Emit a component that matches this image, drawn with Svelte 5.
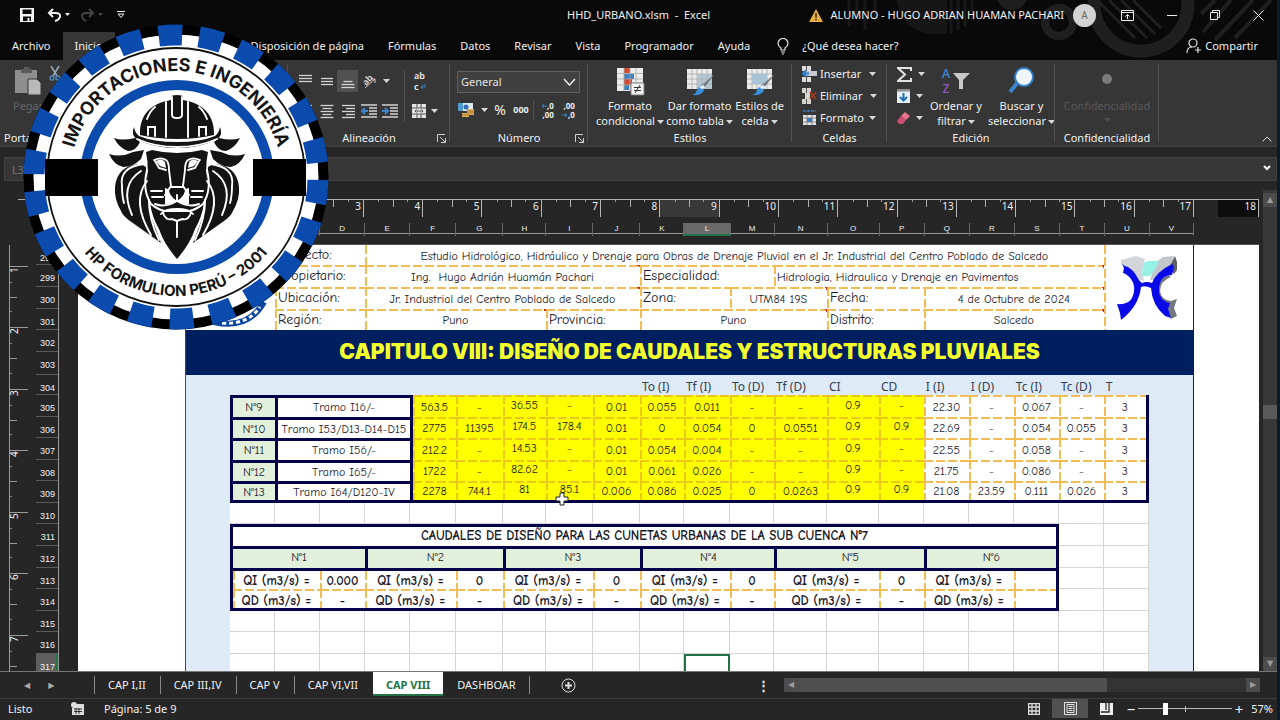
<script>
  const widths = [44, 45, 45, 45, 45, 46, 47, 43, 47, 47, 44, 46, 44, 53, 52, 45, 45, 45, 45, 45, 45, 44];
  const letters = 'ABCDEFGHIJKLMNOPQRSTUV'.split('');
  const gridCols = widths.map((w) => w + 'fr').join(' ');
  const rowHeads = [
    [298, 20], [299, 22], [300, 22], [301, 21], [302, 22], [303, 23], [304, 20], [305, 22],
    [306, 21], [307, 22], [308, 21], [309, 22], [310, 21], [311, 22], [312, 22], [313, 21],
    [314, 22], [315, 21], [316, 22], [317, 22]
  ];
  const ticks = Array.from({ length: 17 }, (_, i) => i + 1);
  const vticks = [1, 2, 3, 4, 5, 6, 7];
  const info = [
    { h: 20, cells: [['Proyecto:', 2, 1], ['Estudio Hidrológico, Hidráulico y Drenaje para Obras de Drenaje Pluvial en el Jr. Industrial del Centro Poblado de Salcedo', 16, 0]] },
    { h: 22, cells: [['Propietario:', 2, 1], ['Ing.  Hugo Adrián Huamán Pachari', 6, 0, 1], ['Especialidad:', 3, 1], ['Hidrologia, Hidraulica y Drenaje en Pavimentos', 7, 2, 1]] },
    { h: 22, cells: [['Ubicación:', 2, 1], ['Jr. Industrial del Centro Poblado de Salcedo', 6, 0, 1], ['Zona:', 2, 1], ['UTM84 19S', 2, 0, 1], ['Fecha:', 2, 1], ['4 de Octubre de 2024', 4, 0, 1]] },
    { h: 21, cells: [['Región:', 2, 1], ['Puno', 4, 0, 1], ['Provincia:', 2, 1], ['Puno', 4, 0, 1], ['Distrito:', 2, 1], ['Salcedo', 4, 0, 1]] }
  ];
  const heads = ['', '', '', '', '', '', '', '', '', 'To (I)', 'Tf (I)', 'To (D)', 'Tf (D)', 'CI', 'CD', 'I (I)', 'I (D)', 'Tc (I)', 'Tc (D)', 'T'];
  const data = [
    { h: 22, n: 'N°9', t: 'Tramo I16/-', v: ['563.5', '-', '36.55', '-', '0.01', '0.055', '0.011', '-', '-', '0.9', '-', '22.30', '-', '0.067', '-', '3'] },
    { h: 21, n: 'N°10', t: 'Tramo I53/D13-D14-D15', v: ['2775', '11395', '174.5', '178.4', '0.01', '0', '0.054', '0', '0.0551', '0.9', '0.9', '22.69', '-', '0.054', '0.055', '3'] },
    { h: 22, n: 'N°11', t: 'Tramo I56/-', v: ['212.2', '-', '14.53', '-', '0.01', '0.054', '0.004', '-', '-', '0.9', '-', '22.55', '-', '0.058', '-', '3'] },
    { h: 21, n: 'N°12', t: 'Tramo I65/-', v: ['1722', '-', '82.62', '-', '0.01', '0.061', '0.026', '-', '-', '0.9', '-', '21.75', '-', '0.086', '-', '3'] },
    { h: 22, n: 'N°13', t: 'Tramo I64/D120-IV', v: ['2278', '744.1', '81', '85.1', '0.006', '0.086', '0.025', '0', '0.0263', '0.9', '0.9', '21.08', '23.59', '0.111', '0.026', '3'] }
  ];
  const raised = [2, 3, 9, 10];
  const flows = [
    { h: 21, label: 'QI (m3/s) =', v: ['0.000', '0', '0', '0', '0', ''] },
    { h: 22, label: 'QD (m3/s) =', v: ['-', '-', '-', '-', '-', ''] }
  ];
  const menu = ['Disposición de página', 'Fórmulas', 'Datos', 'Revisar', 'Vista', 'Programador', 'Ayuda'];
  const sheets = ['CAP I,II', 'CAP III,IV', 'CAP V', 'CAP VI,VII', 'CAP VIII', 'DASHBOAR'];
  let zoom = $state(57);
</script>

{#snippet caret()}<svg class="caret" width="7" height="4" viewBox="0 0 7 4"><path d="M0 0h7L3.500 4z" fill="#d8d8d8" /></svg>{/snippet}
{#snippet lines(ws, align)}
  <svg width="16" height="16" viewBox="0 0 16 16" stroke="#d4d4d4" stroke-width="1.300">
    {#each ws as w, i}
      <path d={align === 'r' ? `M15 ${2.5 + i * 3}H${15 - w}` : align === 'c' ? `M${8 - w / 2} ${2.5 + i * 3}h${w}` : `M1 ${2.5 + i * 3}h${w}`} />
    {/each}
  </svg>
{/snippet}
{#snippet launcher()}<button class="launch" aria-label="Opciones del grupo"><svg width="9" height="9" viewBox="0 0 9 9" fill="none" stroke="#d0d0d0"><path d="M.5 8V.5H8M3 3l5 5M8.500 4v4.500H4" /></svg></button>{/snippet}
{#snippet tableIcon()}
  <path d="M2 3h25v20H2z" fill="#ececec" />
  <path d="M2 8h25M2 13h25M2 18h25M7 3v20M12 3v20M17 3v20M22 3v20" stroke="#a9a9a9" stroke-width=".8" />
{/snippet}
{#snippet brush()}
  <path d="M30 8L19 21l-3-2z" fill="#8e9498" /><path d="M30 8L19 21l-1-1z" fill="#5c6266" />
  <path d="M19 21c1 5-3 9-12 8 4-1 4-3 5-5 1-3 4-5 7-3z" fill="#3a8edb" /><path d="M14 22l4-3 2 2-2 2z" fill="#e8f2fb" />
{/snippet}

<div class="window">
  <header class="top">
    <svg class="art" width="480" height="60" viewBox="0 0 480 60" aria-hidden="true" fill="none" stroke="#1f1f1f">
      <path d="M52 0v26M60 0v18M68 0v30M78 0v22M154 0v34M161 0v30M168 0v26M175 0v20" stroke-width="3" stroke="#181818" />
      <path d="M100 0q4 30 34 34h16V0z" fill="#161616" stroke="none" />
      <circle cx="262" cy="22" r="14" stroke-width="8" /><circle cx="215" cy="-6" r="16" fill="#1f1f1f" stroke="none" />
      <circle cx="344" cy="4" r="47" stroke-width="13" /><path d="M300 0l38 38M312 0l38 38M324 0l34 34M336 0l28 28" stroke-width="3" />
      <path d="M418 0l-14 14M434 0l-28 32M456 0l-38 40M474 0l-36 38" stroke-width="4" />
    </svg>
    <div class="titlebar">
      <div class="quick">
        <button aria-label="Guardar"><svg width="14" height="14" viewBox="0 0 14 14"><path d="M0 0h14v14H0z" fill="#f2f2f2" /><path d="M2.500 1.500h9v4.500h-9zM3 8.500h8V13H9.500v-3h-2v3H3z" fill="#0a0a0a" /></svg></button>
        <button aria-label="Deshacer"><svg width="24" height="14" viewBox="0 0 24 14" fill="none" stroke="#f2f2f2" stroke-width="2"><path d="M6 1L2 5l4 4M2 5h6q6 0 5 4-1 3-5 4" /><path d="M18 5h5l-2.500 3z" fill="#f2f2f2" stroke="none" /></svg></button>
        <button aria-label="Rehacer"><svg width="24" height="14" viewBox="0 0 24 14" fill="none" stroke="#444" stroke-width="2"><path d="M9 1l4 4-4 4M13 5H7Q1 5 2 9q1 3 4 4" /><path d="M18 5h5l-2.500 3z" fill="#444" stroke="none" /></svg></button>
        <button aria-label="Personalizar"><svg width="8" height="8" viewBox="0 0 8 8"><path d="M0 .5h8" stroke="#eee" /><path d="M1 3h6L4 6.500z" fill="none" stroke="#eee" /></svg></button>
      </div>
      <div class="doc">HHD_URBANO.xlsm&nbsp; -&nbsp; Excel</div>
      <div class="account">
        <svg width="14" height="13" viewBox="0 0 14 13"><path d="M7 0l7 13H0z" fill="#e9b04a" /><path d="M7 4v5M7 10v1.500" stroke="#3a2a08" stroke-width="1.500" /></svg>
        <span class="user">ALUMNO - HUGO ADRIAN HUAMAN PACHARI</span>
        <span class="avatar">A</span>
        <button aria-label="Opciones de cinta"><svg width="13" height="11" viewBox="0 0 13 11" fill="none" stroke="#eee"><path d="M.5.5h12v10H.5zM.5 2.500h12M6.500 9V4.500M4.500 6.500l2-2 2 2" /></svg></button>
        <button aria-label="Minimizar"><svg width="10" height="10" viewBox="0 0 10 10"><path d="M0 5.500h10" stroke="#eee" /></svg></button>
        <button aria-label="Restaurar"><svg width="10" height="10" viewBox="0 0 10 10" fill="none" stroke="#eee"><path d="M.5 2.500h7v7h-7zM2.500 2V.5h7v7H8" /></svg></button>
        <button aria-label="Cerrar"><svg width="11" height="11" viewBox="0 0 11 11"><path d="M.5.5l10 10M10.500.5l-10 10" stroke="#eee" /></svg></button>
      </div>
    </div>
    <nav class="menu">
      <button class="file">Archivo</button>
      <button class="home">Inicio</button>
      {#each menu as m}<button>{m}</button>{/each}
      <svg width="12" height="17" viewBox="0 0 12 17" fill="none" stroke="#e6e6e6" stroke-width="1.200"><path d="M4 12V10Q1 8 1 5.500a5 5 0 0110 0Q11 8 8 10v2zM4 14h4M5 16h2" /></svg>
      <button>¿Qué desea hacer?</button>
      <button class="share"><svg width="15" height="16" viewBox="0 0 15 16" fill="none" stroke="#e6e6e6" stroke-width="1.200"><circle cx="7" cy="5" r="4" /><path d="M1 15q0-6 5-6M9 12h6M12 9v6" /></svg>Compartir</button>
    </nav>
  </header>

  <section class="ribbon">
    <div class="group clip">
      <div class="body">
        <button class="big dim"><svg width="28" height="30" viewBox="0 0 28 30"><path d="M1 4h22v23H1z" fill="#8e8e8e" /><path d="M7 5V3h3V1h5v2h3v4H7z" fill="#5a5a5a" /><path d="M14 13h9l4 4v12H14z" fill="#b9b9b9" stroke="#363636" /></svg><span>Pegar</span></button>
        <svg width="12" height="16" viewBox="0 0 12 16" fill="none" stroke="#9ab" stroke-width="1.500"><path d="M2 0l6 10M10 0L4 10" /><circle cx="3" cy="12" r="2" stroke="#4d86b8" /><circle cx="9" cy="12" r="2" stroke="#4d86b8" /></svg>
      </div>
      <div class="label">Portapapeles</div>
    </div>
    <div class="group align">
      <div class="body split">
        <div class="rows">
          <div class="row"><button aria-label="Alinear arriba">{@render lines([13, 13, 13])}</button><button aria-label="Alinear al medio">{@render lines([0, 12, 12, 12], 'c')}</button><button class="on" aria-label="Alinear abajo">{@render lines([0, 0, 9, 13, 13], 'c')}</button>
            <button class="wide" aria-label="Orientación"><svg width="18" height="18" viewBox="0 0 18 18"><text x="3" y="11" font-size="9" font-weight="600" fill="#ddd" transform="rotate(-45 8 9)">ab</text><path d="M5 16L15 7M15 11V7h-4" stroke="#ccc" fill="none" /></svg>{@render caret()}</button></div>
          <div class="row"><button aria-label="Izquierda">{@render lines([13, 9, 13, 9, 13])}</button><button aria-label="Centrar">{@render lines([13, 9, 13, 9, 13], 'c')}</button><button aria-label="Derecha">{@render lines([13, 9, 13, 9, 13], 'r')}</button>
            <button aria-label="Reducir sangría"><svg width="16" height="14" viewBox="0 0 16 14" stroke="#d4d4d4" stroke-width="1.300" fill="none"><path d="M0 1h16M8 4h8M8 7h8M8 10h8M0 13h16" /><path d="M7 7H1M4 4L1 7l3 3" stroke="#3f83c4" stroke-width="2" /></svg></button>
            <button aria-label="Aumentar sangría"><svg width="16" height="14" viewBox="0 0 16 14" stroke="#d4d4d4" stroke-width="1.300" fill="none"><path d="M0 1h16M8 4h8M8 7h8M8 10h8M0 13h16" /><path d="M0 7h6M3 4l3 3-3 3" stroke="#3f83c4" stroke-width="2" /></svg></button></div>
        </div>
        <div class="rows second">
          <button class="wide wrap" aria-label="Ajustar texto"><span>ab<br />c</span><svg width="6" height="6" viewBox="0 0 6 6"><path d="M5 0v3H1M3 1L1 3l2 2" stroke="#3f83c4" fill="none" /></svg></button>
          <button class="wide" aria-label="Combinar"><svg width="14" height="14" viewBox="0 0 14 14"><path d="M0 0h14v14H0z" fill="#e4e4e4" /><path d="M0 4h14M0 10h14M5 0v4M9 0v4M5 10v4M9 10v4M3 7h8M4.500 5.500L3 7l1.500 1.500M9.500 5.500L11 7 9.500 8.500" stroke="#444" fill="none" stroke-width=".9" /></svg>{@render caret()}</button>
        </div>
      </div>
      <div class="label">Alineación</div>{@render launcher()}
    </div>
    <div class="group number">
      <div class="body rows">
        <select aria-label="Formato de número"><option>General</option></select>
        <div class="row money">
          <button class="wide" aria-label="Moneda"><svg width="17" height="16" viewBox="0 0 17 16"><path d="M0 1h15v8H0z" fill="#dbe9f3" /><path d="M0 1h5v8H0z" fill="#4f9bd0" /><circle cx="8" cy="5" r="2.500" fill="#2f6fb0" /><path d="M9 7h7v6H9zM4 11h7v4H4z" fill="#e0b060" /><path d="M9 9h7M9 11h7M4 13h7" stroke="#8c6420" stroke-width=".7" /></svg>{@render caret()}</button>
          <button class="pct">%</button><button class="mil">000</button><i></i>
          <button class="dec" aria-label="Aumentar decimales"><span><svg width="6" height="6" viewBox="0 0 6 6"><path d="M6 3H1M3 1L1 3l2 2" stroke="#3f83c4" fill="none" /></svg>,0<br />,00</span></button>
          <button class="dec" aria-label="Disminuir decimales"><span>,00<br /><svg width="6" height="6" viewBox="0 0 6 6"><path d="M0 3h5M3 1l2 2-2 2" stroke="#3f83c4" fill="none" /></svg>,0</span></button>
        </div>
      </div>
      <div class="label">Número</div>{@render launcher()}
    </div>
    <div class="group styles">
      <div class="body">
        <button class="big"><svg width="30" height="30" viewBox="0 0 30 30"><path d="M2 2h26v23H2z" fill="#ececec" /><path d="M9 2h6v5H9zM9 13h8v6H9z" fill="#cf4a33" /><path d="M9 8h10v5H9zM9 19h5v5H9z" fill="#3d7fbd" /><path d="M2 7.500h26M2 13h26M2 19h26M9 2v23M15 2v23M21 2v23" stroke="#aaa" stroke-width=".8" /><path d="M16 17h13v12H16z" fill="#f4f4f4" stroke="#777" /><path d="M19 21.500h7M19 24.500h7M25 19l-5 8" stroke="#333" /></svg><span>Formato<br />condicional{@render caret()}</span></button>
        <button class="big"><svg width="30" height="30" viewBox="0 0 30 30">{@render tableIcon()}<path d="M12 8h15v15H12z" fill="#9fb8c8" opacity=".7" />{@render brush()}</svg><span>Dar formato<br />como tabla{@render caret()}</span></button>
        <button class="big"><svg width="30" height="30" viewBox="0 0 30 30">{@render tableIcon()}<path d="M7 8h15v10H7z" fill="#a9c3d6" />{@render brush()}</svg><span>Estilos de<br />celda{@render caret()}</span></button>
      </div>
      <div class="label">Estilos</div>
    </div>
    <div class="group cells">
      <div class="body col">
        <button><svg width="15" height="16" viewBox="0 0 15 16"><path d="M0 0h9v5H0zM0 11h9v5H0z" fill="#ddd" /><path d="M4 5h11v5H4z" fill="#c4ccd2" /><path d="M4.500 0v5M4.500 11v5" stroke="#555" /><path d="M7 7.500H1M4 4.500l-3 3 3 3" stroke="#2f7fd0" fill="none" stroke-width="2" /></svg>Insertar<b>{@render caret()}</b></button>
        <button><svg width="15" height="16" viewBox="0 0 15 16"><path d="M0 0h9v5H0zM0 11h9v5H0zM3 5h5v6H3z" fill="#d6d3cc" /><path d="M4.500 0v5M4.500 11v5" stroke="#555" /><path d="M8 4l6 7M14 4l-6 7" stroke="#a93a22" stroke-width="1.800" /></svg>Eliminar<b>{@render caret()}</b></button>
        <button><svg width="15" height="16" viewBox="0 0 15 16"><path d="M1 5h13v10H1z" fill="#e2e2e2" /><path d="M1 1h13" stroke="#2f6fb0" stroke-width="2" stroke-dasharray="3 1" /><path d="M5 8h5v4H5z" fill="#2f7fd0" /><path d="M1 8h13M1 12h13M5 5v10M10 5v10" stroke="#777" stroke-width=".8" /></svg>Formato{@render caret()}</button>
      </div>
      <div class="label">Celdas</div>
    </div>
    <div class="group edit">
      <div class="body">
        <div class="col">
          <button aria-label="Autosuma"><svg width="15" height="15" viewBox="0 0 15 15"><path d="M14 4V1H1l7 6.500L1 14h13v-3" fill="none" stroke="#e2e2e2" stroke-width="2" /></svg>{@render caret()}</button>
          <button aria-label="Rellenar"><svg width="13" height="14" viewBox="0 0 13 14"><path d="M0 0h13v14H0z" fill="#e8eef3" /><path d="M0 0h13v2.500H0z" fill="#8d8d8d" /><path d="M6.500 4v7M3 8l3.500 3.500L10 8" stroke="#2272b8" stroke-width="2" fill="none" /></svg>{@render caret()}</button>
          <button aria-label="Borrar"><svg width="13" height="12" viewBox="0 0 13 12"><path d="M8 0l5 4-4 4-5-4z" fill="#e8718d" /><path d="M4 4l5 4-3 4H2L0 9z" fill="#c94f70" /></svg>{@render caret()}</button>
        </div>
        <button class="big"><span class="sort"><span class="az"><em>A</em><em>Z</em></span><svg width="18" height="16" viewBox="0 0 18 16"><path d="M1 0h17l-7 7v9H7V7z" fill="#c9c9c9" /></svg></span><span>Ordenar y<br />filtrar{@render caret()}</span></button>
        <button class="big"><svg width="30" height="30" viewBox="0 0 30 30"><path d="M12 16L4 26" stroke="#3c83cc" stroke-width="4" /><circle cx="18" cy="11" r="9" fill="#eef6fc" stroke="#2f80c8" stroke-width="2" /></svg><span>Buscar y<br />seleccionar{@render caret()}</span></button>
      </div>
      <div class="label">Edición</div>
    </div>
    <div class="group conf">
      <div class="body"><button class="big off"><svg width="30" height="30" viewBox="0 0 30 30"><circle cx="15" cy="13" r="5" fill="#7a7a7a" /></svg><span>Confidencialidad</span><svg width="7" height="4" viewBox="0 0 7 4"><path d="M0 0h7L3.500 4z" fill="#505050" /></svg></button></div>
      <div class="label">Confidencialidad</div>
    </div>
    <button class="collapse" aria-label="Contraer cinta"><svg width="10" height="6" viewBox="0 0 10 6" fill="none" stroke="#ddd"><path d="M.5 5.500l4.500-4.500 4.500 4.500" /></svg></button>
  </section>

  <div class="formula">
    <input class="name" aria-label="Cuadro de nombres" value="L317" />
    <input class="fx" aria-label="Barra de fórmulas" />
    <svg width="8" height="6" viewBox="0 0 8 6"><path d="M1 1l3 3 3-3" stroke="#fff" stroke-width="2" fill="none" /></svg>
  </div>

  <main class="canvas">
    <div class="left">
      <div class="vruler">{#each vticks as t}<div><span>{t}</span></div>{/each}</div>
      <div class="rowheads">{#each rowHeads as [n, h]}<div class:active={n === 317} style="height:{h}px">{n}</div>{/each}</div>
    </div>
    <div class="view">
      <div class="rulers">
        <div class="hruler">
          <div class="scale">{#each ticks as t}<div class:lit={t === 9}>{t}</div>{/each}</div>
          <div class="beyond">18</div>
        </div>
        <div class="letters" style="grid-template-columns:{gridCols}">{#each letters as l}<div class:active={l === 'L'}>{l}</div>{/each}</div>
      </div>
      <div class="page">
        <table>
          <colgroup>{#each widths as w}<col style="width:{w / 10.07}%" />{/each}</colgroup>
          <tbody>
            {#each info as r, i}
              <tr style="height:{r.h}px" class:opening={i === 0}>
                {#if i === 0}<td colspan="2" rowspan="4" class="white"></td>{/if}
                {#each r.cells as [t, span, kind, note]}
                  <td colspan={span} class="dash white" class:key={kind === 1} class:lead={kind === 2} class:note>{t}</td>
                {/each}
                {#if i === 0}
                  <td colspan="2" rowspan="4" class="white mark">
                    <svg width="60" height="66" viewBox="0 0 60 66">
                      <path d="M3 5L18 1l9 3-3 10 2 12-10-3Q8 14 3 9z" fill="#d3d5d8" /><path d="M38 7l7-5 11-1-2 8-12 9-4 7h-6z" fill="#c3c6ca" />
                      <path d="M25 8l5-2h11l-4 9-5 6h-8z" fill="#97f1e6" />
                      <path d="M57 1l2 6v8l-3 4-5-6z" fill="#5b5f66" />
                      <path d="M53 22Q42 26 42 36q1 9 11 10l6-2-3 9 3 8-6 3-6-10Q38 46 38 36q2-12 12-16z" fill="#74787e" />
                      <path d="M4 9q3 3 6 3 5 3 8 8 3 6 6 8 5-2 10 0 4-11 20-19l2 3-2 8q-9 0-12 8-3 9 2 16 5 4 8 4l-2 6 3 9-6-2Q34 50 33 33q-6-3-10-1Q21 51 3 65l-1-7-3-9q11 1 15-6 5-11-1-19-4-5-8-6l1-5z" fill="#0a0ae8" />
                    </svg>
                  </td>
                {/if}
              </tr>
            {/each}
            <tr class="banner"><th colspan="22">CAPITULO VIII: DISEÑO DE CAUDALES Y ESTRUCTURAS PLUVIALES</th></tr>
            <tr class="heads"><td></td>{#each heads as h}<td>{h}</td>{/each}<td></td></tr>
            {#each data as r, i}
              <tr style="height:{r.h}px" class:last={i === 4}>
                <td class="side"></td><td class="navy green">{r.n}</td><td colspan="3" class="navy white">{r.t}</td>
                {#each r.v as v, c}
                  <td class="dash" class:yellow={c < 11} class:white={c > 10} class:first={c === 0} class:raised={raised.includes(c)} class:end={c === 15} class:pointer={i === 4 && c === 3}>{v}{#if i === 4 && c === 3}<svg class="cursor" width="14" height="14" viewBox="0 0 14 14"><path d="M5 1h4v4h4v4H9v4H5V9H1V5h4z" fill="#fff" stroke="#222" /></svg>{/if}</td>
                {/each}
                <td class="side"></td>
              </tr>
            {/each}
            <tr style="height:21px"><td class="side"></td>{#each widths.slice(2) as _}<td class="grid"></td>{/each}<td class="side"></td></tr>
            <tr style="height:22px" class="caption"><td class="side"></td><th colspan="18" class="navy white endr">CAUDALES DE DISEÑO PARA LAS CUNETAS URBANAS DE LA SUB CUENCA N°7</th><td class="grid"></td><td class="grid"></td><td class="side"></td></tr>
            <tr style="height:22px" class="caption"><td class="side"></td>{#each [1, 2, 3, 4, 5, 6] as n}<td colspan="3" class="navy green" class:endr={n === 6}>N°{n}</td>{/each}<td class="grid"></td><td class="grid"></td><td class="side"></td></tr>
            {#each flows as r, i}
              <tr style="height:{r.h}px" class:last={i === 1} class:under={i === 0} class="flow">
                <td class="side"></td>
                {#each r.v as v, c}<td colspan="2" class="dash white" class:first={c === 0}>{r.label}</td><td class="dash white" class:endr={c === 5}>{v}</td>{/each}
                <td class="grid"></td><td class="grid"></td><td class="side"></td>
              </tr>
            {/each}
            {#each [21, 22, 22] as h, i}
              <tr style="height:{h}px"><td class="side"></td>{#each widths.slice(2) as _, c}<td class="grid" class:selected={i === 2 && c === 10}></td>{/each}<td class="side"></td></tr>
            {/each}
          </tbody>
        </table>
      </div>
    </div>
    <div class="vscroll"><span class="arrow">▲</span><span class="thumb"></span><span class="arrow">▼</span></div>
  </main>

  <div class="tabs">
    <div class="nav"><button aria-label="Anterior">◀</button><button aria-label="Siguiente">▶</button></div>
    {#each sheets as s}<button class="tab" class:current={s === 'CAP VIII'}>{s}</button>{/each}
    <button class="add" aria-label="Hoja nueva"><svg width="15" height="15" viewBox="0 0 15 15" fill="none" stroke="#ddd"><circle cx="7.500" cy="7.500" r="6.500" /><path d="M7.500 4v7M4 7.500h7" stroke-width="2" /></svg></button>
    <span class="dots">⋮</span>
    <div class="hscroll"><span class="arrow">◀</span><span class="track"><span></span></span><span class="arrow">▶</span></div>
  </div>

  <footer>
    <span class="ready">Listo</span>
    <svg width="13" height="13" viewBox="0 0 13 13"><path d="M3 2h10v11H1V6h2z" fill="#ddd" /><circle cx="3" cy="3" r="3" fill="#ddd" /><path d="M3 7h8M3 9.500h8M5 6v6M8 6v6" stroke="#333" /></svg>
    <span class="pages">Página: 5 de 9</span>
    <div class="views">
      <button aria-label="Normal"><svg width="12" height="12" viewBox="0 0 12 12" fill="none" stroke="#ddd" stroke-width="1.300"><path d="M.6.6h10.800v10.800H.6zM.6 4h11M.6 8h11M4 .6v11M8 .6v11" /></svg></button>
      <button class="on" aria-label="Diseño de página"><svg width="13" height="13" viewBox="0 0 13 13" fill="none" stroke="#e4e4e4"><path d="M.5.5h12v12H.5zM3 2.500h7v8H3zM4.500 4.500h4M4.500 6.500h4M4.500 8.500h4" /></svg></button>
      <button aria-label="Saltos de página"><svg width="13" height="12" viewBox="0 0 13 12"><path d="M0 0h13v12H0z" fill="#eee" /><path d="M6 0v7M1 9h8V0" stroke="#222" stroke-width="1.300" fill="none" /></svg></button>
    </div>
    <button class="sign">−</button>
    <input type="range" aria-label="Zoom" min="0" max="200" bind:value={zoom} />
    <button class="sign">+</button>
    <span class="pc">{zoom}%</span>
  </footer>

  <svg class="seal" width="308" height="312" viewBox="22 22 308 312" role="img" aria-label="Importaciones e Ingeniería HP Formulion Perú">
    <defs>
      <path id="arc-top" d="M70 177A106 106 0 01282 177" />
      <path id="arc-bottom" d="M57 177A119 119 0 00295 177" />
    </defs>
    <path d="M214 322q34 8 50-20" fill="none" stroke="#0d47a1" stroke-width="6" /><path d="M222 323q26 2 38-16" fill="none" stroke="#fff" stroke-width="3" stroke-dasharray="4 3" />
    <circle cx="176" cy="177" r="143" fill="#fff" />
    <circle cx="176" cy="177" r="147.500" fill="none" stroke="#000" stroke-width="10" />
    <circle cx="176" cy="177" r="142" fill="none" stroke="#0b4bad" stroke-width="21" pathLength="220" stroke-dasharray="5.800 4.200" transform="rotate(-97 176 177)" />
    <circle cx="176" cy="177" r="129" fill="#fff" stroke="#111" stroke-width="1.800" />
    <circle cx="177" cy="177" r="92" fill="none" stroke="#0b4bad" stroke-width="10" />
    <path d="M45 159h53v37H45zM253 159h53v37h-53z" fill="#000" />
    <text class="arc" font-size="18"><textPath href="#arc-top" startOffset="50%" text-anchor="middle">IMPORTACIONES E INGENIERÍA</textPath></text>
    <text class="arc" font-size="15"><textPath href="#arc-bottom" startOffset="50%" text-anchor="middle">HP FORMULION PERÚ – 2001</textPath></text>
    {#each ['', 'translate(354 0) scale(-1 1)'] as flip}
      <g transform={flip} fill="#141414">
        <path d="M140 133C140 114 152 103 171 100v-3q0-2 6-2v44q-20 0-37-4z" />
        <path d="M134 127q-3 7 2 12 18 9 41 9v-6q-24 0-38-6-4-3-5-9z" />
        <path d="M114 138q8 3 21 0l5 4q-4 9-12 9-9-3-14-13z" />
        <path d="M109 154q12 4 24-2l11-2-3 9q-8 8-18 8-9-2-14-13z" />
        <path d="M141 164q-24 1-26 23-1 12 6 24 2 5 9 10l31 22-12-32-3-44z" />
        <path d="M146 152l6-2q12 3 25 3v58h-12l-14-7-6-16q5-18 1-36z" />
        <path d="M150 203q8 7 15 8h12v48q-13-15-18-30-7-12-9-26z" />
        <g fill="none" stroke="#fff" stroke-width="1.900" stroke-linecap="round">
          <path d="M166 102v35M172 97v18q0 3 5 3M148 135v-8h7v9M147 119q3-8 8-12" />
          <path d="M137 139q18 8 40 8" />
          <path d="M144 164q-25 3-22 22 0 10 2 17M141 171q-22 14-9 44M147 181q-16 20 4 54M149 200q0 20 10 40" />
          <path d="M147 170q-5 20 4 34 7 6 14 7h12" />
          <path d="M154 160q7-3 12 0 3 2 3 10l2 16-6 9M155 161l4 7 7 2" />
          <path d="M151 191h11M152 197h11M155 204q10 4 22-3v-6M171 187h6M161 214q4-5 16-5M163 213q3 8 9 6l5 2v16" />
        </g>
        <path d="M156 161q6-3 9 1l1 6-6-2z" fill="#fff" />
        <path d="M165 188q4 0 5 6 3 5 7 7-6 4-12 3z" fill="#fff" />
      </g>
    {/each}
  </svg>
</div>

<style>
  :global(body) { background: #262626; }
  * { box-sizing: border-box; }
  .window { display: flex; flex-direction: column; height: 100vh; position: relative; overflow: hidden; background: #262626; color: #f0f0f0; font: 11px/16px "Noto Sans", "Segoe UI", sans-serif; border-right: 3px solid #0d1b28; }
  button { background: none; border: 0; padding: 0; margin: 0; color: inherit; font: inherit; display: inline-flex; align-items: center; justify-content: center; white-space: nowrap; }
  svg { flex: none; }
  .top { background: #090909; position: relative; flex: none; height: 60px; }
  .art { position: absolute; right: 0; top: 0; }
  .titlebar { position: relative; display: grid; grid-template-columns: 1fr auto 1fr; height: 30px; align-items: center; }
  .quick { display: flex; gap: 13px; padding-left: 20px; align-items: center; }
  .quick button:nth-child(2) { margin-right: -4px; }
  .account { display: flex; align-items: center; justify-content: flex-end; padding-right: 13px; gap: 33px; }
  .user { margin-left: -25px; white-space: nowrap; }
  .avatar { width: 23px; height: 23px; border-radius: 50%; background: #d3d3d3; color: #666; font-size: 10px; text-align: center; line-height: 23px; margin-left: -24px; margin-right: -8px; }
  .menu { position: relative; display: flex; height: 30px; align-items: center; gap: 24px; padding: 2px 19px 0 0; }
  .menu .file { margin-left: 12px; }
  .menu .home { background: #363636; height: 28px; width: 52px; margin: 0 112px 0 -12px; align-self: flex-end; }
  .menu > svg { margin-left: 3px; margin-right: -11px; }
  .menu .share { margin-left: auto; gap: 4px; }
  .ribbon { display: flex; flex: none; height: 87px; background: #363636; border-bottom: 1px solid #424242; position: relative; }
  .group { position: relative; flex: none; display: flex; flex-direction: column; }
  .group::after { content: ""; position: absolute; right: 0; top: 4px; bottom: 4px; width: 1px; background: #505050; }
  .body { flex: 1; display: flex; align-items: flex-start; padding-top: 6px; }
  .label { text-align: center; line-height: 14px; height: 15px; }
  .clip { width: 288px; }
  .clip .body { padding-left: 13px; gap: 6px; }
  .clip .label { text-align: left; padding-left: 4px; }
  .dim { color: #666; }
  .align { width: 162px; }
  .number { width: 138px; }
  .styles { width: 204px; }
  .cells { width: 95px; }
  .edit { width: 168px; }
  .conf { width: 104px; }
  .launch { position: absolute; right: 4px; bottom: 3px; }
  .caret { display: inline-block; vertical-align: middle; margin-left: 2px; }
  .rows { display: flex; flex-direction: column; gap: 8px; }
  .row { display: flex; align-items: center; height: 22px; }
  .row button { width: 21px; height: 22px; }
  .align .body { padding: 10px 0 0 7px; }
  .align .wide { width: 34px; height: 22px; gap: 3px; }
  .align .second { border-left: 1px solid #505050; margin-left: 4px; padding-left: 3px; width: 40px; align-items: flex-start; }
  .align .wrap { font-size: 9px; line-height: 11px; font-weight: 600; text-align: left; justify-content: flex-start; align-items: flex-end; padding-left: 6px; gap: 0; }
  .wrap svg { margin-left: -5px; margin-bottom: 2px; }
  .on { background: #505050; }
  .number .body { padding: 11px 8px 0 7px; }
  select { appearance: none; width: 123px; height: 22px; border: 1px solid #606060; border-radius: 0; color: #e4e4e4; font: 11px/16px "Noto Sans", sans-serif; padding: 0 3px; background: #404040 url("data:image/svg+xml,%3Csvg xmlns='http://www.w3.org/2000/svg' width='13' height='8'%3E%3Cpath d='M1 1l5.500 6L12 1' fill='none' stroke='%23eee' stroke-width='1.500'/%3E%3C/svg%3E") right 3px center no-repeat; }
  .money { margin-top: -2px; }
  .money .wide { width: 32px; gap: 4px; }
  .money .pct { font-size: 14px; width: 22px; }
  .money .mil { font-size: 9px; font-weight: 700; width: 20px; }
  .money i { width: 1px; height: 20px; background: #505050; margin: 0 3px 0 2px; }
  .money .dec { font-size: 8px; line-height: 9px; font-weight: 700; text-align: right; }
  .big { flex-direction: column; line-height: 15px; text-align: center; gap: 2px; }
  .sort { display: flex; align-items: center; height: 30px; gap: 2px; }
  .az { display: flex; flex-direction: column; font: 600 12px/15px "Noto Sans", sans-serif; color: #3c83cc; }
  em { font-style: normal; }
  em + em { color: #8a55b5; }
  .styles .body { padding-left: 8px; justify-content: space-between; padding-right: 8px; }
  .col { display: flex; flex-direction: column; align-items: flex-start; }
  .cells .body { padding: 3px 0 0 10px; }
  .cells button { height: 22px; gap: 3px; }
  .cells b { margin-left: 3px; display: flex; }
  .edit .body { padding-left: 10px; gap: 6px; }
  .edit .col { margin-top: -3px; margin-right: -1px; }
  .edit .col button { height: 22px; gap: 4px; }
  .conf .body { justify-content: center; }
  .off { color: #595959; }
  .off svg + span { margin-bottom: 3px; }
  .collapse { position: absolute; right: 5px; bottom: 4px; }
  .formula { flex: none; display: flex; height: 43px; padding: 10px 0 9px 4px; gap: 24px; position: relative; align-items: stretch; }
  .formula input { background: #363636; border: 1px solid #414141; color: #777; font: 11px "Noto Sans", sans-serif; min-width: 0; padding: 0 7px; }
  .name { width: 80px; }
  .fx { flex: 1; }
  .formula svg { position: absolute; right: 6px; top: 18px; }
  .canvas { flex: 1; min-height: 0; display: flex; overflow: hidden; border-bottom: 1px solid #777; }
  .left { width: 78px; flex: none; display: flex; padding: 55px 19px 0 9px; gap: 8px; overflow: hidden; }
  .vruler { width: 19px; border-left: 1px solid #9a9a9a; flex: none; }
  .vruler div { height: 61px; border-top: 1px solid #9a9a9a; background: linear-gradient(#9a9a9a, #9a9a9a) 0 50% / 7px 1px no-repeat, linear-gradient(#888, #888) 0 25% / 2px 1px no-repeat, linear-gradient(#888, #888) 0 75% / 2px 1px no-repeat; }
  .vruler div:first-child { margin-top: 21px; }
  .vruler div:nth-child(even) { height: 62px; }
  .vruler span { display: block; width: 9px; height: 10px; writing-mode: vertical-rl; transform: rotate(180deg); font-size: 10px; line-height: 9px; text-align: right; }
  .rowheads { width: 23px; border-right: 1px solid #9a9a9a; font: 9px/26px "Liberation Sans", sans-serif; }
  .rowheads div { border-bottom: 1px solid #5a5a5a; text-align: right; padding-right: 3px; }
  .rowheads .active { background: #5e5e5e; border-right: 2px solid #21734a; padding-right: 1px; }
  .view { flex: 1; min-width: 0; display: flex; flex-direction: column; }
  .rulers { padding-top: 9px; height: 54px; flex: none; }
  .hruler { display: flex; margin-left: -60px; padding-left: 168px; border-top: 1px solid #b0b0b0; height: 25px; font: 10px/13px "Noto Sans", sans-serif; }
  .scale { flex: 1; display: grid; grid-template-columns: repeat(17, 1fr); }
  .scale div { height: 17px; border-right: 1px solid #b8b8b8; text-align: right; padding-right: 2px; background: linear-gradient(#b0b0b0, #b0b0b0) 50% 0 / 1px 7px no-repeat, linear-gradient(#999, #999) 25% 0 / 1px 2px no-repeat, linear-gradient(#999, #999) 75% 0 / 1px 2px no-repeat; }
  .scale .lit { background-color: #383838; }
  .beyond { width: 41px; margin-left: 24px; height: 17px; background: #0d0d0d; border-right: 1px solid #b8b8b8; text-align: right; padding-right: 2px; }
  .letters { display: grid; margin: -1px 65px 0 108px; border-bottom: 1px solid #9a9a9a; font: 8px/11px "Liberation Sans", sans-serif; text-align: center; height: 11px; }
  .letters div { border-right: 1px solid #666; }
  .letters .active { background: #6a6a6a; border-bottom: 2px solid #21734a; }
  .page { flex: 1; background: #fff; padding: 0 66px 0 108px; overflow: hidden; border-top: 1px solid #555; }
  table { width: 100%; table-layout: fixed; border-spacing: 0; color: #1a1a2a; font: 12px/15px "Comic Sans MS", "Comic Neue", "Noto Sans", sans-serif; box-shadow: -1px 0 #444, 1px 0 #111a55; }
  td, th { padding: 0; text-align: center; white-space: nowrap; overflow: hidden; }
  .white { background-color: #fff; }
  .green { background-color: #e2efda; }
  .yellow { background-color: #ff0; }
  .side { background: #deebf7; }
  .dash { padding-top: 2px; }
  .dash { --c: #f2bd55; --h: repeating-linear-gradient(90deg, var(--c) 0 9px, transparent 9px 12px); --v: repeating-linear-gradient(var(--c) 0 9px, transparent 9px 12px); background-image: var(--h), var(--v); background-size: 100% 2px, 2px 100%; background-repeat: no-repeat; white-space: pre; }
  .yellow.dash { --c: #ecc81c; }
  .note { background-image: linear-gradient(45deg, transparent 50%, #d8281c 50%), var(--h), var(--v); background-size: 3px 3px, 100% 2px, 2px 100%; background-position: 100% 0, 0 0, 0 0; }
  .opening .dash { background-image: var(--v); background-size: 2px 100%; }
  .key { font-size: 14px; line-height: 18px; text-align: left; padding: 0 0 0 3px; }
  .lead { text-align: left; padding-left: 3px; }
  .mark { background-image: repeating-linear-gradient(#f2bd55 0 9px, transparent 9px 12px); background-size: 2px 100%; background-repeat: no-repeat; vertical-align: middle; }
  .mark svg { display: block; margin: 0 auto; overflow: visible; }
  .banner { height: 45px; }
  .banner th { background: #001f5f; color: #f4ff2e; font: 900 21px/24px "Arial Black", Inter, sans-serif; padding-bottom: 2px; }
  .heads { height: 20px; background: #deebf7; }
  .heads td { text-align: left; padding: 3px 0 0 2px; font: 12px/16px "Noto Sans", sans-serif; color: #333f50; }
  .navy { border-left: 3px solid #04044a; border-top: 3px solid #04044a; }
  .first { border-left: 3px solid #04044a; }
  .end, .endr { border-right: 3px solid #04044a; }
  .last td:not(.side, .grid) { border-bottom: 3px solid #04044a; }
  .under .dash { border-top: 3px solid #04044a; background-size: 0 0, 2px 100%; padding-top: 0; }
  .raised { padding: 0 0 2px; }
  .pointer { position: relative; overflow: visible; }
  .cursor { position: absolute; left: 9px; top: 11px; }
  .flow td, .caption th { font-weight: 700; font-size: 13px; }
  .caption .navy { padding-bottom: 2px; }
  .flow.last .dash { padding-top: 4px; }
  .grid { background: #fff; border-right: 1px solid #d4d4d4; border-bottom: 1px solid #d4d4d4; }
  .selected { border: 2px solid #217346; }
  .vscroll { width: 18px; flex: none; padding: 3px 0 0 4px; display: flex; flex-direction: column; justify-content: space-between; background: linear-gradient(90deg, #262626 4px, #383838 4px); }
  .arrow { width: 14px; height: 14px; background: #4c4c4c; color: #999; font: 8px/14px "DejaVu Sans", sans-serif; text-align: center; flex: none; }
  .thumb { height: 14px; background: #5a5a5a; margin-bottom: 40px; }
  .tabs { flex: none; display: flex; height: 26px; align-items: center; }
  .nav { width: 94px; display: flex; gap: 18px; padding-left: 24px; font: 8px "DejaVu Sans", sans-serif; color: #aaa; }
  .tab { height: 18px; border-left: 1px solid #888; padding: 0 14px 0 13px; }
  .tab.current { height: 24px; align-self: flex-start; background: #fff; color: #21733f; font-weight: 700; border-bottom: 2px solid #217346; border-left: 0; padding: 3px 13px 0; margin-left: 1px; }
  .tab.current + .tab { border-left: 0; border-right: 1px solid #888; padding: 0 13px 0 14px; }
  .add { margin-left: 31px; }
  .dots { margin-left: auto; font-size: 13px; font-weight: 700; margin-right: 14px; }
  .hscroll { width: 476px; margin-right: 17px; display: flex; background: #333; }
  .track { flex: 1; display: flex; }
  .track span { width: 69%; background: #4f4f4f; }
  footer { flex: none; height: 22px; border-top: 1px solid #3d3d3d; display: flex; align-items: center; padding: 0 4px 2px 8px; }
  .ready { width: 63px; }
  .pages { margin-left: 20px; }
  .views { margin-left: auto; display: flex; height: 100%; margin-right: 2px; }
  .views button { width: 36px; }
  .sign { font-size: 15px; width: 10px; }
  input[type="range"] { appearance: none; width: 94px; height: 12px; margin: 0 2px; background: linear-gradient(#bbb, #bbb) center / 100% 1px no-repeat, linear-gradient(#bbb, #bbb) center / 1px 6px no-repeat; }
  input[type="range"]::-webkit-slider-thumb { appearance: none; width: 5px; height: 12px; background: #fff; }
  .pc { width: 29px; text-align: right; }
  .seal { position: absolute; left: 22px; top: 22px; }
  .arc { font-family: Inter, "Open Sans", sans-serif; font-weight: 700; fill: #151515; }
</style>
